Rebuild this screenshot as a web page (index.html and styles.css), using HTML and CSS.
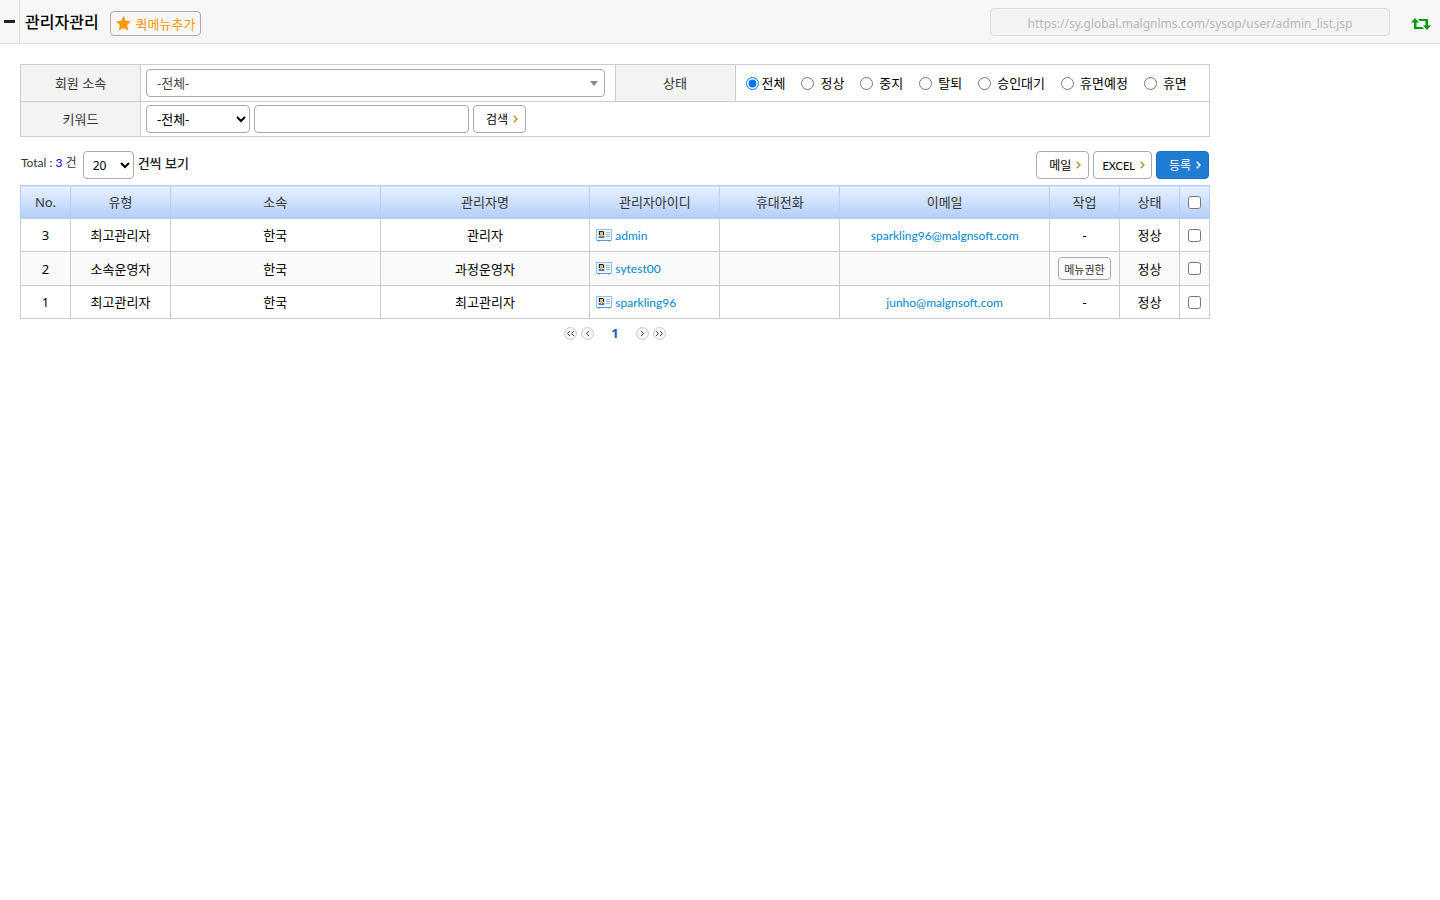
FILE: index.html
```html
<!DOCTYPE html>
<html lang="ko">
<head>
  <meta charset="UTF-8" />
  <meta name="viewport" content="width=device-width, initial-scale=1.0"/>
  <title>관리자관리</title>
  <link rel="stylesheet" href="styles.css">
</head>
<body>
  <header class="topbar">
    <button type="button" class="fold" aria-label="메뉴 접기"><span class="fold-line"></span></button>
    <h1>관리자관리</h1>
    <button type="button" class="btn quick">
      <svg width="15" height="15" viewBox="0 0 14 14"><path d="M7 0l2.100 4.500 4.900.6-3.600 3.400.9 5L7 11.200l-4.300 2.300.9-5L0 5.100l4.900-.6z" fill="#ff9800"/></svg>
      퀵메뉴추가
    </button>
    <input type="text" class="url" aria-label="페이지 주소" value="https://sy.global.malgnlms.com/sysop/user/admin_list.jsp" disabled>
    <button type="button" class="reload" aria-label="새로고침">
      <svg width="20" height="12" viewBox="0 0 20 12" fill="#009b00"><path d="M4 0l4 4.500H5.500V9H11l2 2H3V4.500H0z"/><path d="M16 12l-4-4.500h2.500V3H9L7 1h10v6.500h3z"/></svg>
    </button>
  </header>

  <main class="content">
    <form>
      <table class="search">
        <colgroup><col class="c-th"><col><col class="c-th"><col></colgroup>
        <tr>
          <th><label for="site">회원 소속</label></th>
          <td>
            <div class="combo">
              <select id="site"><option>-전체-</option></select>
            </div>
          </td>
          <th>상태</th>
          <td>
            <div class="radios">
              <label class="first"><input type="radio" name="status" checked>전체</label>
              <label><input type="radio" name="status">정상</label>
              <label><input type="radio" name="status">중지</label>
              <label><input type="radio" name="status">탈퇴</label>
              <label><input type="radio" name="status">승인대기</label>
              <label><input type="radio" name="status">휴면예정</label>
              <label><input type="radio" name="status">휴면</label>
            </div>
          </td>
        </tr>
        <tr>
          <th><label for="field">키워드</label></th>
          <td colspan="3">
            <div class="keyword">
              <select id="field" class="field"><option>-전체-</option></select>
              <input type="text" class="word" aria-label="검색어">
              <button type="button" class="btn">검색 <svg class="arrow" width="5" height="8" viewBox="0 0 5 8"><path d="M.7.7L4 4 .7 7.300"/></svg></button>
            </div>
          </td>
        </tr>
      </table>
    </form>

    <div class="tools">
      <p class="total">Total : <span>3</span> 건</p>
      <select id="rows" class="rows"><option>20</option></select>
      <label for="rows">건씩 보기</label>
      <div class="actions">
        <button type="button" class="btn">메일 <svg class="arrow" width="5" height="8" viewBox="0 0 5 8"><path d="M.7.7L4 4 .7 7.300"/></svg></button>
        <button type="button" class="btn excel">EXCEL <svg class="arrow" width="5" height="8" viewBox="0 0 5 8"><path d="M.7.7L4 4 .7 7.300"/></svg></button>
        <button type="button" class="btn primary">등록 <svg class="arrow" width="5" height="8" viewBox="0 0 5 8"><path d="M.7.7L4 4 .7 7.300"/></svg></button>
      </div>
    </div>

    <svg width="0" height="0" class="defs">
      <symbol id="card" viewBox="0 0 16 13">
        <path d="M.5.5h15v11h-2v1h-1v-1h-9v1h-1v-1h-2z" fill="#eef7ff" stroke="#8fc0ea"/>
        <path d="M1 11.500h14" stroke="#5a9bd5"/>
        <path d="M2 2h7v7H2z" fill="#c5e0f7"/>
        <path d="M3 2h4l1 1v3H3z" fill="#2e2015"/>
        <path d="M4 3h3v4H4z" fill="#f2b56b"/>
        <path d="M3 7h5v2H3z" fill="#3b6fae"/>
        <path d="M5 7h1v1H5z" fill="#fff"/>
        <path d="M10 3.500h4M10 5.500h4M10 7.500h4" stroke="#9dbdd8"/>
      </symbol>
    </svg>

    <table class="list">
      <colgroup>
        <col class="c-no"><col class="c-type"><col><col><col class="c-id"><col class="c-tel"><col><col class="c-work"><col class="c-stat"><col class="c-chk">
      </colgroup>
      <thead>
        <tr>
          <th>No.</th><th>유형</th><th>소속</th><th>관리자명</th><th>관리자아이디</th><th>휴대전화</th><th>이메일</th><th>작업</th><th>상태</th>
          <th><input type="checkbox" aria-label="전체 선택"></th>
        </tr>
      </thead>
      <tbody>
        <tr>
          <td>3</td><td>최고관리자</td><td>한국</td><td>관리자</td>
          <td class="id"><svg width="16" height="13"><use href="#card"/></svg><a href="#">admin</a></td>
          <td></td><td><a href="#">sparkling96@malgnsoft.com</a></td><td>-</td><td>정상</td>
          <td><input type="checkbox" aria-label="admin 선택"></td>
        </tr>
        <tr>
          <td>2</td><td>소속운영자</td><td>한국</td><td>과정운영자</td>
          <td class="id"><svg width="16" height="13"><use href="#card"/></svg><a href="#">sytest00</a></td>
          <td></td><td></td><td><button type="button" class="btn small">메뉴권한</button></td><td>정상</td>
          <td><input type="checkbox" aria-label="sytest00 선택"></td>
        </tr>
        <tr>
          <td>1</td><td>최고관리자</td><td>한국</td><td>최고관리자</td>
          <td class="id"><svg width="16" height="13"><use href="#card"/></svg><a href="#">sparkling96</a></td>
          <td></td><td><a href="#">junho@malgnsoft.com</a></td><td>-</td><td>정상</td>
          <td><input type="checkbox" aria-label="sparkling96 선택"></td>
        </tr>
      </tbody>
    </table>

    <nav class="paging">
      <a href="#" class="page-btn" aria-label="처음"><svg width="9" height="7" viewBox="0 0 9 7"><path d="M4 1L1.500 3.500 4 6M8 1L5.500 3.500 8 6"/></svg></a>
      <a href="#" class="page-btn" aria-label="이전"><svg width="5" height="7" viewBox="0 0 5 7"><path d="M4 1L1.500 3.500 4 6"/></svg></a>
      <strong>1</strong>
      <a href="#" class="page-btn" aria-label="다음"><svg width="5" height="7" viewBox="0 0 5 7"><path d="M1 1l2.500 2.500L1 6"/></svg></a>
      <a href="#" class="page-btn" aria-label="마지막"><svg width="9" height="7" viewBox="0 0 9 7"><path d="M1 1l2.500 2.500L1 6M5 1l2.500 2.500L5 6"/></svg></a>
    </nav>
  </main>
</body>
</html>
```
FILE: styles.css
```css
* {
  box-sizing: border-box;
}

body {
  margin: 0;
  background: #fff;
  color: #000;
  font-family: "Noto Sans", "Noto Sans CJK KR", sans-serif;
  font-size: 13px;
  line-height: 18px;
}

input, select, button {
  font-family: inherit;
  font-size: 13px;
  color: #000;
}

a {
  color: #0088cc;
  text-decoration: none;
}

table {
  width: 100%;
  border-collapse: collapse;
  table-layout: fixed;
}

th {
  color: #333;
  font-weight: normal;
}

/* top bar */
.topbar {
  display: flex;
  align-items: center;
  height: 44px;
  background: #f7f7f7;
  border-bottom: 1px solid #ddd;
}

.fold {
  align-self: stretch;
  width: 20px;
  padding: 0 4px;
  border: 0;
  border-right: 1px solid #ddd;
  background: none;
}

.fold-line {
  display: block;
  height: 3px;
  background: #222;
}

.topbar h1 {
  margin: 0 11px 0 5px;
  font-size: 16px;
  line-height: 24px;
  font-weight: 500;
}

.url {
  width: 400px;
  height: 28px;
  margin-left: auto;
  padding: 3px 2px 0;
  border: 1px solid #ddd;
  border-radius: 4px;
  background: #f3f3f3;
  color: #b8b8b8;
  font-size: 12px;
  text-align: center;
}

.reload {
  display: flex;
  margin: 4px 9px 0 21px;
  padding: 0;
  border: 0;
  background: none;
}

/* buttons */
.btn {
  display: inline-flex;
  align-items: center;
  justify-content: center;
  gap: 5px;
  height: 28px;
  padding: 0 7px 0 12px;
  border: 1px solid #aaa;
  border-radius: 4px;
  background: #fff;
  font-size: 12px;
  white-space: nowrap;
}

.btn.quick {
  height: 25px;
  margin-top: 3px;
  padding: 0 5px;
  background: #f7f7f7;
  color: #ff9800;
  font-size: 13px;
}

.btn.primary {
  border-color: #1a6fc0;
  background: #217dd4;
  color: #fff;
}

.btn.excel {
  padding: 0 6px 0 8px;
  font-family: Lato, sans-serif;
  font-size: 11px;
}

.btn.small {
  height: 23px;
  padding: 0 5px;
  background: #fafafa;
  color: #333;
  font-size: 11px;
}

.arrow path {
  fill: none;
  stroke: #b5952f;
  stroke-width: 1.5;
}

.primary .arrow path {
  stroke: #fff;
}

/* search form */
.content {
  max-width: 1230px;
  padding: 20px;
}

.search th, .search td {
  height: 35px;
  padding: 0 5px;
  border: 1px solid #ccc;
}

.search tr:first-child > * {
  height: 37px;
}

.search th {
  background: #f3f3f3;
}

.c-th {
  width: 120px;
}

.search select, .word, .rows {
  height: 28px;
  border: 1px solid #aaa;
  border-radius: 4px;
  background: #fff;
}

.combo {
  position: relative;
  margin-right: 5px;
}

.combo select {
  display: block;
  width: 100%;
  padding: 0 10px;
  appearance: none;
  color: #444;
}

.combo::after {
  content: "";
  position: absolute;
  top: 12px;
  right: 7px;
  border: 4px solid transparent;
  border-top: 5px solid #888;
  border-bottom: 0;
  pointer-events: none;
}

.radios {
  display: flex;
  gap: 16px;
  padding-left: 5px;
}

.radios label {
  display: flex;
  align-items: center;
  gap: 6px;
}

.radios .first {
  gap: 3px;
}

.radios input {
  margin: 1px 0 0;
}

.keyword {
  display: flex;
  gap: 4px;
}

.field {
  width: 104px;
  padding: 0 6px;
}

.field, .rows {
  padding-right: 0;
}

.word {
  width: 215px;
}

/* total and actions */
.tools {
  display: flex;
  align-items: center;
  gap: 4px;
  height: 48px;
  padding: 8px 1px 0;
}

.total {
  margin: 0 2px 4px 0;
  color: #333;
  font-family: Lato, "Noto Sans CJK KR", sans-serif;
  font-size: 12px;
}

.total span {
  color: #00f;
}

.rows {
  width: 51px;
  padding-left: 5px;
  font-size: 12px;
}

.tools label {
  margin-bottom: 4px;
  color: #222;
  font-weight: 500;
}

.actions {
  display: flex;
  gap: 4px;
  margin-left: auto;
}

.defs {
  display: block;
}

/* list */
.list th, .list td {
  height: 33px;
  padding: 0 6px;
  border: 1px solid #ccc;
  text-align: center;
}

.list th {
  border-color: #b5cffa;
  background: linear-gradient(#e8f2ff, #b3cefa);
}

.list tbody tr:nth-child(even) td {
  height: 34px;
  background: #fafafa;
}

.list input {
  display: block;
  margin: 0 auto;
}

.list a {
  font-family: Lato, sans-serif;
  font-size: 12px;
}

.list .id {
  text-align: left;
}

.id svg {
  margin-right: 3px;
  vertical-align: -2px;
}

.c-no { width: 50px; }
.c-type { width: 100px; }
.c-id { width: 130px; }
.c-tel { width: 120px; }
.c-work { width: 70px; }
.c-stat { width: 60px; }
.c-chk { width: 30px; }

/* paging */
.paging {
  display: flex;
  align-items: center;
  justify-content: center;
  gap: 4px;
  padding-top: 5px;
}

.paging strong {
  margin: 0 13px;
  color: #1a5fc0;
}

.page-btn {
  display: flex;
  align-items: center;
  justify-content: center;
  width: 13px;
  height: 13px;
  border: 1px solid #ccc;
  border-radius: 50%;
  background: #f5f5f5;
}

.page-btn path {
  fill: none;
  stroke: #444;
}
```
